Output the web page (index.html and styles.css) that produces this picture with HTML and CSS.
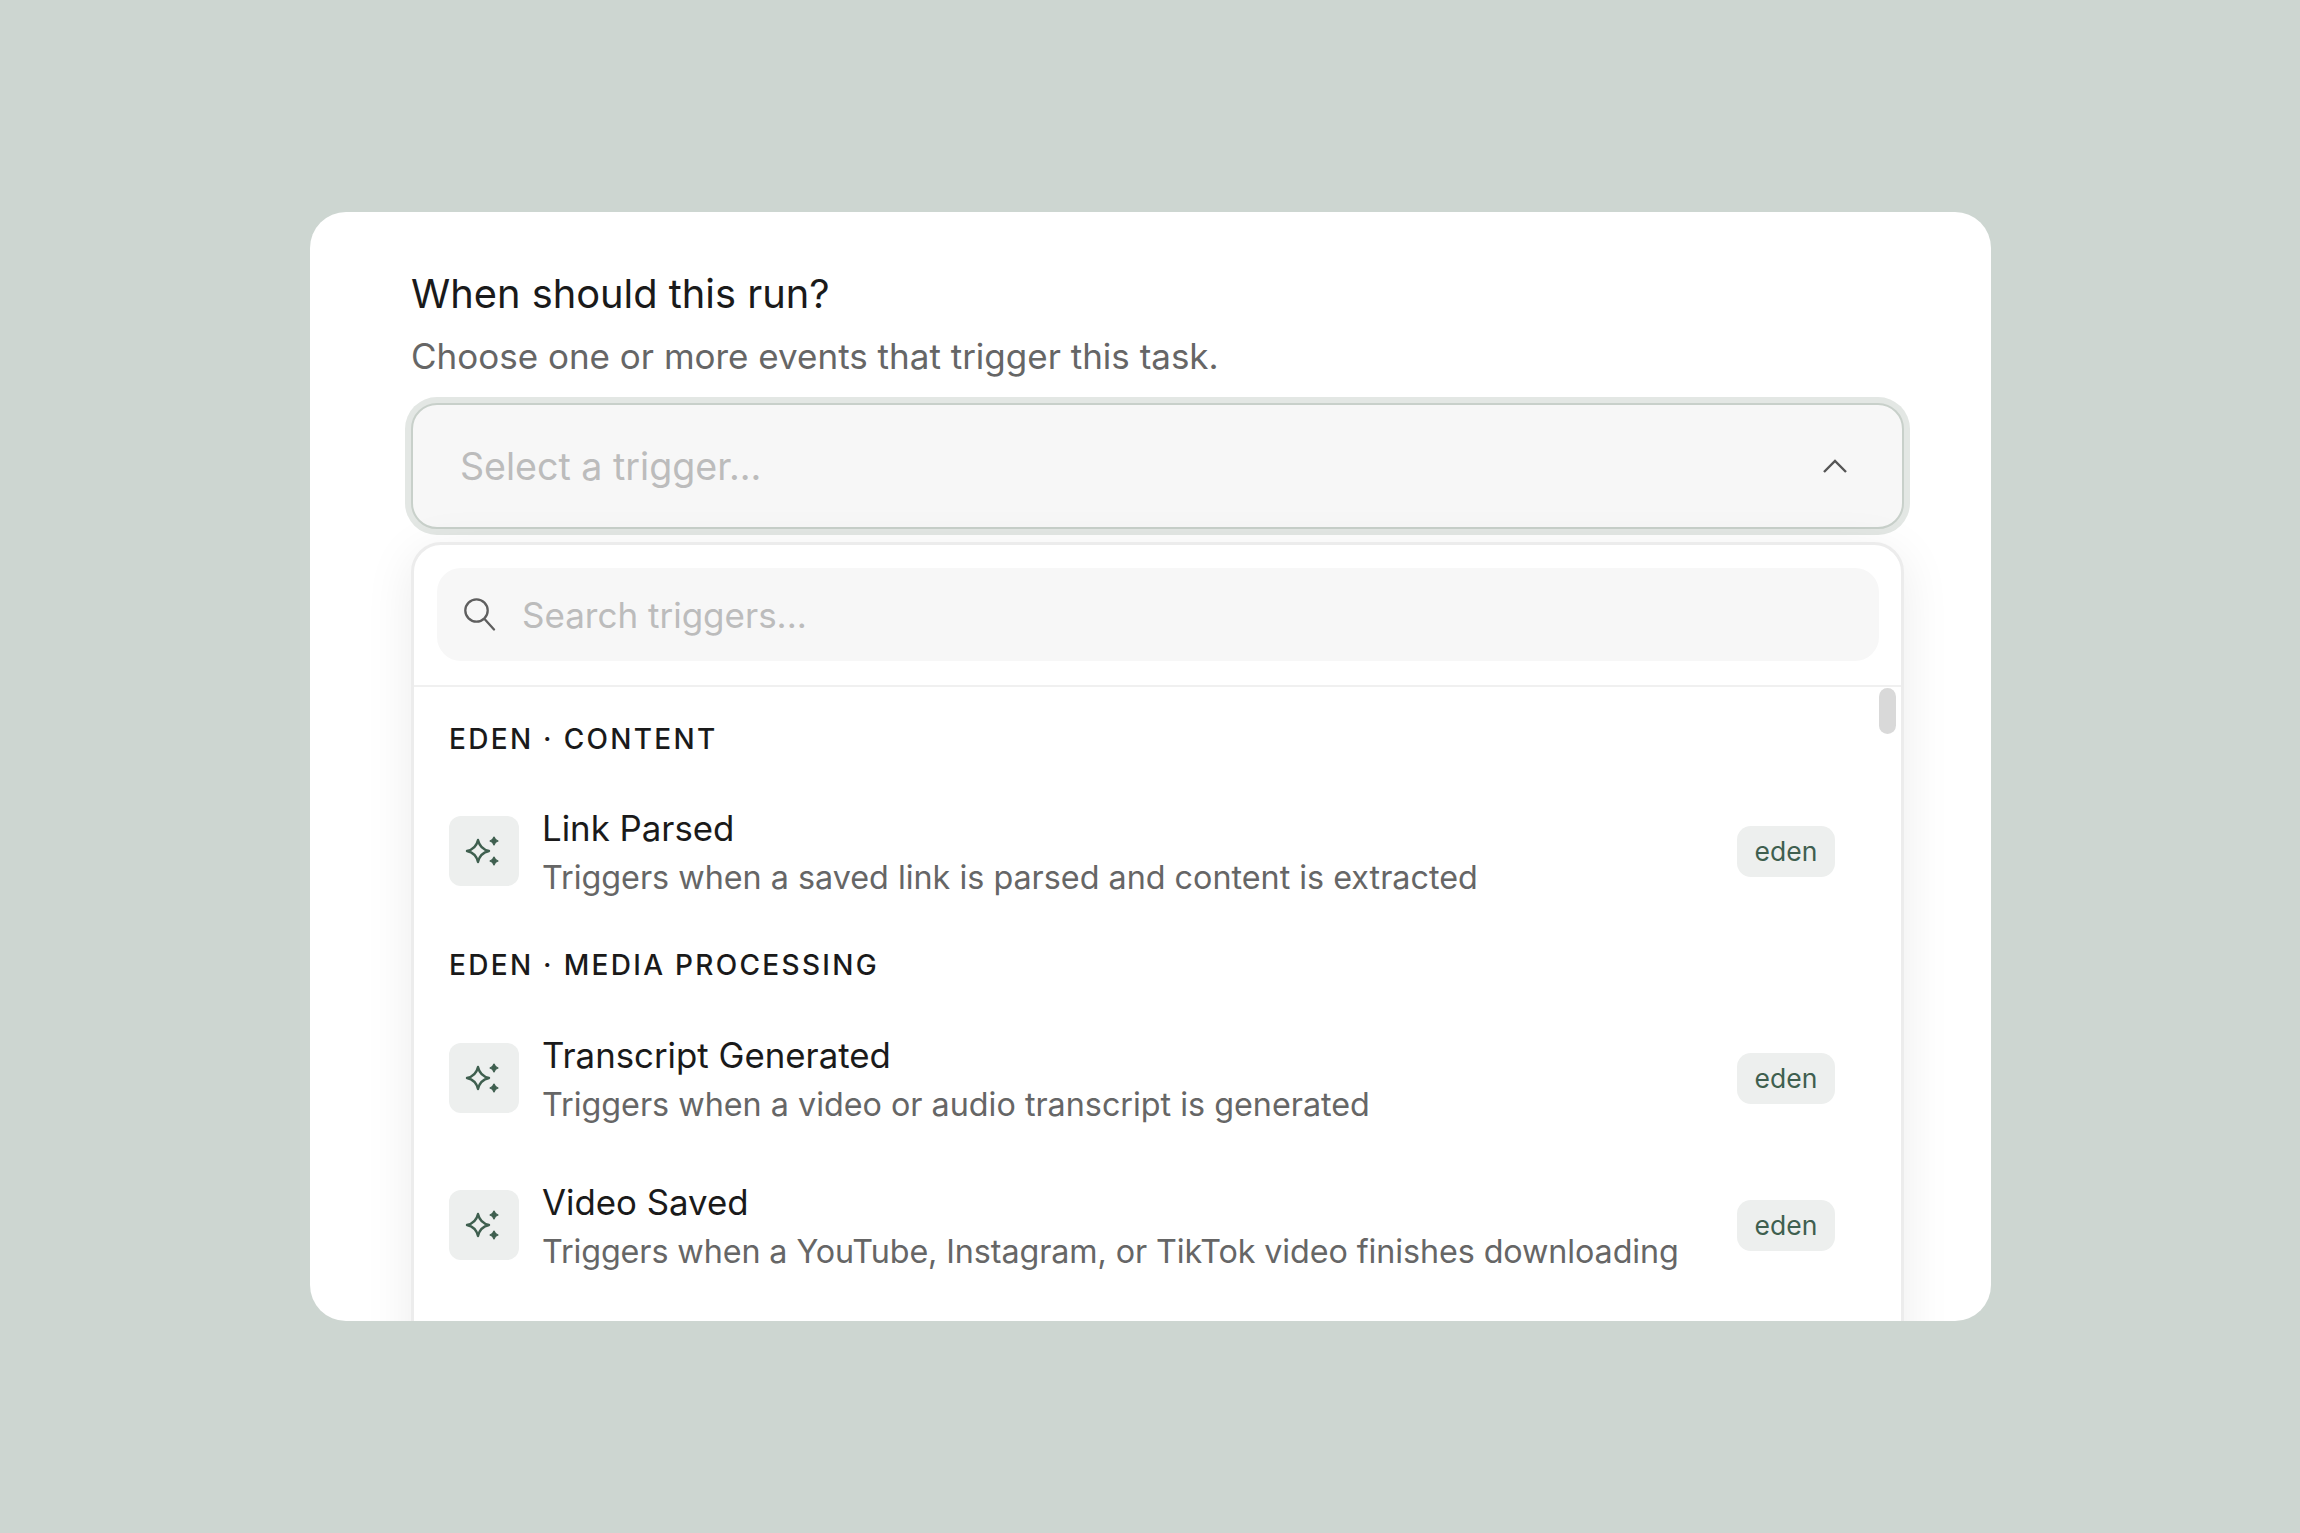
FILE: index.html
```html
<!DOCTYPE html>
<html lang="en">
<head>
    <meta charset="UTF-8">
    <title>Select a trigger</title>
    <link rel="stylesheet" href="styles.css">
</head>
<body>
    <div class="card">
        <h2 class="title">When should this run?</h2>
        <p class="subtitle">Choose one or more events that trigger this task.</p>

        <!-- Select box -->
        <div class="trigger-select">
            <span class="select-placeholder">Select a trigger...</span>
            <svg class="chevron" width="26" height="14" viewBox="0 0 26 14" fill="none">
                <path d="M2 13L13 2L24 13" stroke="#555" stroke-width="2.4"/>
            </svg>
        </div>

        <!-- Dropdown -->
        <div class="dropdown">
            <div class="search-wrap">
                <div class="search-box">
                    <svg width="32" height="33" viewBox="0 0 32 33" fill="none">
                        <circle cx="12.5" cy="12.5" r="11.2" stroke="#5f5f5f" stroke-width="2.3"/>
                        <path d="M21 21.5L30 31.5" stroke="#5f5f5f" stroke-width="2.3" stroke-linecap="round"/>
                    </svg>
                    <input class="search-input" type="text" placeholder="Search triggers...">
                </div>
            </div>

            <div class="list">
                <div class="scroll-thumb"></div>

                <div class="group-label">EDEN · CONTENT</div>
                <div class="row">
                    <div class="row-icon">
                        <svg width="40" height="40" viewBox="0 0 40 40" fill="none">
                            <path class="star" d="M14 9Q16 18 25 20Q16 22 14 31Q12 22 3 20Q12 18 14 9Z"/>
                            <path class="star-small" d="M30 6Q31 9 34 10Q31 11 30 14Q29 11 26 10Q29 9 30 6Z"/>
                            <path class="star-small" d="M30 26Q31 29 34 30Q31 31 30 34Q29 31 26 30Q29 29 30 26Z"/>
                        </svg>
                    </div>
                    <div class="row-text">
                        <div class="row-name">Link Parsed</div>
                        <div class="row-desc">Triggers when a saved link is parsed and content is extracted</div>
                    </div>
                    <span class="badge">eden</span>
                </div>

                <div class="group-label">EDEN · MEDIA PROCESSING</div>
                <div class="row">
                    <div class="row-icon">
                        <svg width="40" height="40" viewBox="0 0 40 40" fill="none">
                            <path class="star" d="M14 9Q16 18 25 20Q16 22 14 31Q12 22 3 20Q12 18 14 9Z"/>
                            <path class="star-small" d="M30 6Q31 9 34 10Q31 11 30 14Q29 11 26 10Q29 9 30 6Z"/>
                            <path class="star-small" d="M30 26Q31 29 34 30Q31 31 30 34Q29 31 26 30Q29 29 30 26Z"/>
                        </svg>
                    </div>
                    <div class="row-text">
                        <div class="row-name">Transcript Generated</div>
                        <div class="row-desc">Triggers when a video or audio transcript is generated</div>
                    </div>
                    <span class="badge">eden</span>
                </div>
                <div class="row">
                    <div class="row-icon">
                        <svg width="40" height="40" viewBox="0 0 40 40" fill="none">
                            <path class="star" d="M14 9Q16 18 25 20Q16 22 14 31Q12 22 3 20Q12 18 14 9Z"/>
                            <path class="star-small" d="M30 6Q31 9 34 10Q31 11 30 14Q29 11 26 10Q29 9 30 6Z"/>
                            <path class="star-small" d="M30 26Q31 29 34 30Q31 31 30 34Q29 31 26 30Q29 29 30 26Z"/>
                        </svg>
                    </div>
                    <div class="row-text">
                        <div class="row-name">Video Saved</div>
                        <div class="row-desc desc-long">Triggers when a YouTube, Instagram, or TikTok video finishes downloading</div>
                    </div>
                    <span class="badge">eden</span>
                </div>
            </div>
        </div>
    </div>
</body>
</html>
```

FILE: styles.css
```css
body {
    margin: 0;
    height: 1533px;
    box-sizing: border-box;
    padding: 212px 309px 0 310px;
    background: #cdd6d1;
    font-family: Inter, "Liberation Sans", sans-serif;
    overflow: hidden;
}

/* White card, clips the dropdown at the bottom */
.card {
    height: 1109px;
    box-sizing: border-box;
    padding: 54px 87px 0 101px;
    background: #fff;
    border-radius: 36px;
    overflow: hidden;
}

.title {
    margin: 0;
    font-size: 39.8px;
    line-height: 56px;
    font-weight: 400;
    color: #1a1a1a;
}

.subtitle {
    margin: 12px 0 25px;
    font-size: 35px;
    line-height: 44px;
    color: #666;
}

/* Select box */
.trigger-select {
    height: 126px;
    box-sizing: border-box;
    display: flex;
    align-items: center;
    justify-content: space-between;
    padding: 0 54px 0 47px;
    background: #f7f7f7;
    border: 2px solid #c8d0ca;
    border-radius: 26px;
    box-shadow: 0 0 0 6px #e3e7e4;
}

.select-placeholder {
    font-size: 37.6px;
    color: #bcbcbc;
}

.chevron {
    display: block;
}

/* Dropdown */
.dropdown {
    margin-top: 13px;
    height: 860px;
    box-sizing: border-box;
    background: #fff;
    border: 3px solid #ececec;
    border-radius: 30px;
    box-shadow: 0 10px 50px rgba(0, 0, 0, 0.08);
}

.search-wrap {
    padding: 23px 22px 24px 23px;
    border-bottom: 2px solid #f0f0f0;
}

.search-box {
    height: 93px;
    display: flex;
    align-items: center;
    gap: 26px;
    padding: 0 27px;
    background: #f7f7f7;
    border-radius: 24px;
}

.search-input {
    flex: 1;
    border: none;
    outline: none;
    padding: 0;
    background: transparent;
    font-family: inherit;
    font-size: 35px;
    color: #333;
}

.search-input::placeholder {
    color: #bcbcbc;
}

.list {
    position: relative;
    padding: 13px 66px 0 35px;
}

.scroll-thumb {
    position: absolute;
    top: 1px;
    right: 5px;
    width: 17px;
    height: 46px;
    background: #d9d9d9;
    border-radius: 9px;
}

.group-label {
    height: 78px;
    display: flex;
    align-items: center;
    font-size: 28px;
    font-weight: 450;
    letter-spacing: 2.3px;
    color: #1a1a1a;
}

.row {
    height: 147px;
    display: flex;
    align-items: center;
    gap: 23px;
}

/* First row sits a touch tighter under its label */
.list .row:nth-child(3) {
    margin-top: -1px;
    margin-bottom: 2px;
}

.row-icon {
    width: 70px;
    height: 70px;
    flex-shrink: 0;
    display: flex;
    align-items: center;
    justify-content: center;
    background: #edefee;
    border-radius: 12px;
}

.star {
    stroke: #3f5f4f;
    stroke-width: 2.4;
    stroke-linejoin: round;
}

.star-small {
    fill: #3f5f4f;
    stroke: #3f5f4f;
    stroke-width: 1.2;
    stroke-linejoin: round;
}

.row-text {
    flex: 1;
    min-width: 0;
    margin-top: 3px;
}

.row-name {
    font-size: 34.8px;
    line-height: 51px;
    color: #1a1a1a;
}

.row-desc {
    font-size: 32.3px;
    line-height: 48px;
    color: #666;
}

.desc-long {
    letter-spacing: -0.1px;
}

.badge {
    width: 98px;
    height: 51px;
    margin-top: 1px;
    flex-shrink: 0;
    display: flex;
    align-items: center;
    justify-content: center;
    background: #edefee;
    border-radius: 14px;
    font-size: 26.5px;
    color: #3f5f4f;
}
```
